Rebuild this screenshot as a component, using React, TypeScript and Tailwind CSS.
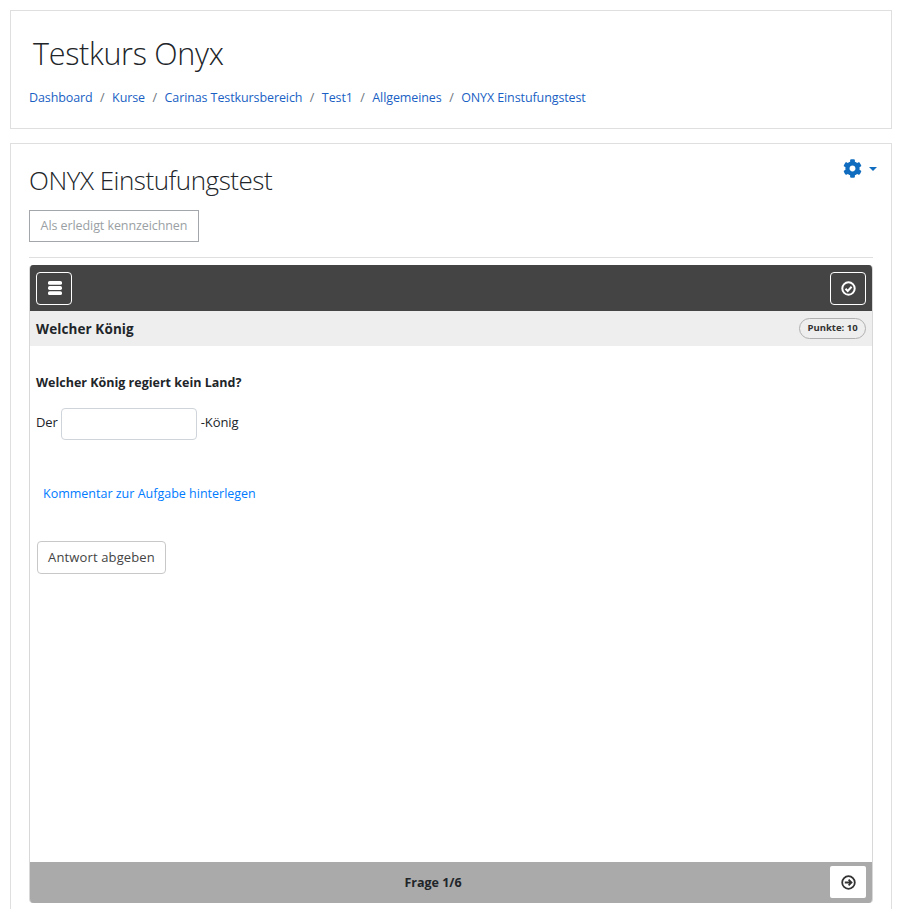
import React from 'react';
import { FaCog } from 'react-icons/fa';

const crumbs = ['Dashboard', 'Kurse', 'Carinas Testkursbereich', 'Test1', 'Allgemeines', 'ONYX Einstufungstest'];

const font = "font-['Open_Sans','Noto_Sans',sans-serif]";

export default function App() {
  return (
    <div className={`h-[909px] overflow-hidden bg-white px-[10px] pt-[10px] text-[#212529] ${font}`}>
      <header className="h-[119px] border border-[#dfdfdf] pl-[18px] pt-[19px]">
        <h1 className="ml-[4px] h-[46px] text-[30.5px] leading-[46px] font-light tracking-[-0.3px]">Testkurs Onyx</h1>
        <nav className="mt-[12px] flex text-[12.5px] leading-[20px] tracking-[-0.1px]">
          {crumbs.map((c, i) => (
            <span key={c} className="flex">
              {i > 0 && <span className="w-[19.5px] text-center text-[#6c757d]">/</span>}
              <a className="text-[#1a5fc4]">{c}</a>
            </span>
          ))}
        </nav>
      </header>

      <main className="relative mt-[14px] h-[800px] border border-[#dfdfdf] px-[18px] pt-[17px]">
        <div className="absolute right-[14px] top-[15px] flex items-center gap-[7px] text-[#0f6cbf]">
          <FaCog className="h-[19px] w-[19px]" />
          <span className="h-0 w-0 border-x-[4px] border-t-[4px] border-x-transparent border-t-[#0f6cbf]" />
        </div>
        <h2 className="h-[38px] text-[26px] leading-[38px] font-light tracking-[-0.48px]">ONYX Einstufungstest</h2>
        <button className="mt-[11px] block h-[32px] w-[170px] border border-[#a3a7ab] text-center text-[12.5px] tracking-[-0.08px] text-[#9a9fa4]">
          Als erledigt kennzeichnen
        </button>
        <hr className="mt-[15px] border-[#dfdfdf]" />

        <section className="mt-[7px] flex h-[638px] flex-col overflow-hidden rounded-[4px] border-x border-[#d8d8d8]">
          <div className="flex h-[46px] shrink-0 items-center justify-between bg-[#444444] px-[6px]">
            <button className="flex h-[33px] w-[36px] items-center justify-center rounded-[4px] border border-white pl-[1px]">
              <svg width="14" height="14" viewBox="0 0 14 14" fill="#fff">
                <rect x="0" y="0" width="14" height="3.8" rx="1.6" />
                <rect x="0" y="5.1" width="14" height="3.8" rx="1.6" />
                <rect x="0" y="10.2" width="14" height="3.8" rx="1.6" />
              </svg>
            </button>
            <button className="flex h-[33px] w-[36px] items-center justify-center rounded-[4px] border border-white">
              <svg width="15" height="15" viewBox="0 0 15 15" fill="none" stroke="#fff" strokeWidth="2">
                <circle cx="7.5" cy="7.5" r="6.2" />
                <path d="M4.5 7.8l2.2 2.2 3.9-4.2" />
              </svg>
            </button>
          </div>

          <div className="flex h-[35px] shrink-0 items-center justify-between bg-[#eeeeee] pl-[6px] pr-[6px]">
            <span className="pt-[1px] text-[13.5px] font-bold tracking-[0.1px]">Welcher König</span>
            <span className="flex h-[21px] w-[67px] items-center justify-center rounded-full border border-[#b0b0b0] text-[9.5px] font-bold text-[#333]">
              Punkte: 10
            </span>
          </div>

          <div className="flex-1 bg-white pl-[6px]">
            <p className="mt-[28px] text-[12.5px] leading-[18px] font-bold">Welcher König regiert kein Land?</p>
            <div className="mt-[16px] flex items-center text-[13px] tracking-[-0.1px]">
              <span className="mb-[2px]">Der</span>
              <input className="ml-[3px] mr-[4px] h-[32px] w-[136px] rounded-[4px] border border-[#ced4da]" />
              <span className="mb-[2px]">-König</span>
            </div>
            <a className="ml-[7px] mt-[45px] block text-[12.5px] leading-[18px] text-[#007bff]">Kommentar zur Aufgabe hinterlegen</a>
            <button className="ml-[1px] mt-[38px] block h-[33px] w-[129px] rounded-[4px] border border-[#c8c8c8] pt-[1px] text-center text-[13px] tracking-[0.13px] text-[#444]">
              Antwort abgeben
            </button>
          </div>

          <div className="relative flex h-[41px] shrink-0 items-center justify-center bg-[#aaaaaa]">
            <span className="ml-[-36px] pt-[1px] text-[12.5px] font-bold">Frage 1/6</span>
            <button className="absolute right-[6px] top-[4px] flex h-[32px] w-[36px] items-center justify-center rounded-[2px] bg-white">
              <svg width="15" height="15" viewBox="0 0 15 15" fill="none" stroke="#333" strokeWidth="1.8">
                <circle cx="7.5" cy="7.5" r="6.3" />
                <path d="M3.8 7.5h6.6M7.6 4.6l2.9 2.9-2.9 2.9" />
              </svg>
            </button>
          </div>
        </section>
      </main>
    </div>
  );
}
